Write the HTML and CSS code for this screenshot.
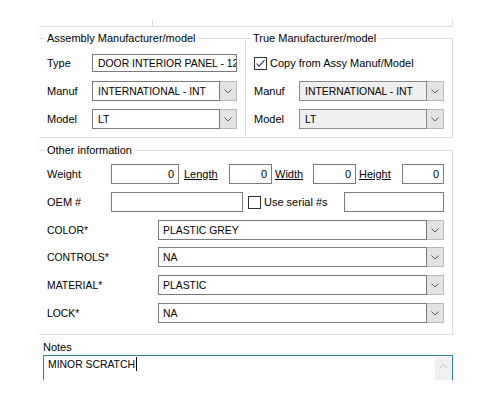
FILE: index.html
```html
<!DOCTYPE html>
<html>
<head>
<meta charset="utf-8">
<link rel="stylesheet" href="styles.css">
</head>
<body>
<div class="page">
  <div class="topbox"><span class="tick"></span></div>

  <div class="groups">
    <div class="group g1">
      <span class="legend">Assembly Manufacturer/model</span>
      <div class="row r-first">
        <span class="lbl w45">Type</span>
        <div class="tb w145 h18"><span class="val caps">DOOR INTERIOR PANEL - 12"</span></div>
      </div>
      <div class="row r-9">
        <span class="lbl w45">Manuf</span>
        <div class="combo w145">
          <div class="field"><span class="val caps">INTERNATIONAL - INT</span></div>
          <div class="btn"><svg width="8" height="5" viewBox="0 0 8 5"><polyline points="0.5,0.5 4,4 7.5,0.5" fill="none" stroke="#5a5a5a" stroke-width="1"/></svg></div>
        </div>
      </div>
      <div class="row r-8">
        <span class="lbl w45">Model</span>
        <div class="combo w145">
          <div class="field"><span class="val caps">LT</span></div>
          <div class="btn"><svg width="8" height="5" viewBox="0 0 8 5"><polyline points="0.5,0.5 4,4 7.5,0.5" fill="none" stroke="#5a5a5a" stroke-width="1"/></svg></div>
        </div>
      </div>
    </div>

    <div class="group g2">
      <span class="legend">True Manufacturer/model</span>
      <div class="row r-first">
        <span class="check"><svg width="13" height="13" viewBox="0 0 13 13"><rect x="0.5" y="0.5" width="12" height="12" fill="#fff" stroke="#333"/><polyline points="2.5,6.5 5,9.2 10.5,3.2" fill="none" stroke="#333" stroke-width="1.1"/></svg></span>
        <span class="chk-text">Copy from Assy Manuf/Model</span>
      </div>
      <div class="row r-9">
        <span class="lbl w45">Manuf</span>
        <div class="combo w145 disabled">
          <div class="field"><span class="val caps">INTERNATIONAL - INT</span></div>
          <div class="btn"><svg width="8" height="5" viewBox="0 0 8 5"><polyline points="0.5,0.5 4,4 7.5,0.5" fill="none" stroke="#5a5a5a" stroke-width="1"/></svg></div>
        </div>
      </div>
      <div class="row r-8">
        <span class="lbl w45">Model</span>
        <div class="combo w145 disabled">
          <div class="field"><span class="val caps">LT</span></div>
          <div class="btn"><svg width="8" height="5" viewBox="0 0 8 5"><polyline points="0.5,0.5 4,4 7.5,0.5" fill="none" stroke="#5a5a5a" stroke-width="1"/></svg></div>
        </div>
      </div>
    </div>
  </div>

  <div class="group other">
    <span class="legend">Other information</span>
    <div class="row r-first2">
      <span class="lbl w64">Weight</span>
      <div class="tb num w68"><span class="val">0</span></div>
      <span class="dim d-len">Length</span>
      <div class="tb num w43"><span class="val">0</span></div>
      <span class="dim d-wid">Width</span>
      <div class="tb num w43"><span class="val">0</span></div>
      <span class="dim d-hei">Height</span>
      <div class="tb num w42"><span class="val">0</span></div>
    </div>
    <div class="row r-8">
      <span class="lbl w64">OEM #</span>
      <div class="tb w132"></div>
      <span class="check c-serial"><svg width="13" height="13" viewBox="0 0 13 13"><rect x="0.5" y="0.5" width="12" height="12" fill="#fff" stroke="#333"/></svg></span>
      <span class="chk-text">Use serial #s</span>
      <div class="tb w100 push"></div>
    </div>
    <div class="row r-8">
      <span class="lbl w111 caps">COLOR*</span>
      <div class="combo w286">
        <div class="field"><span class="val caps">PLASTIC GREY</span></div>
        <div class="btn"><svg width="8" height="5" viewBox="0 0 8 5"><polyline points="0.5,0.5 4,4 7.5,0.5" fill="none" stroke="#5a5a5a" stroke-width="1"/></svg></div>
      </div>
    </div>
    <div class="row r-7">
      <span class="lbl w111 caps">CONTROLS*</span>
      <div class="combo w286">
        <div class="field"><span class="val caps">NA</span></div>
        <div class="btn"><svg width="8" height="5" viewBox="0 0 8 5"><polyline points="0.5,0.5 4,4 7.5,0.5" fill="none" stroke="#5a5a5a" stroke-width="1"/></svg></div>
      </div>
    </div>
    <div class="row r-8">
      <span class="lbl w111 caps">MATERIAL*</span>
      <div class="combo w286">
        <div class="field"><span class="val caps">PLASTIC</span></div>
        <div class="btn"><svg width="8" height="5" viewBox="0 0 8 5"><polyline points="0.5,0.5 4,4 7.5,0.5" fill="none" stroke="#5a5a5a" stroke-width="1"/></svg></div>
      </div>
    </div>
    <div class="row r-8">
      <span class="lbl w111 caps">LOCK*</span>
      <div class="combo w286">
        <div class="field"><span class="val caps">NA</span></div>
        <div class="btn"><svg width="8" height="5" viewBox="0 0 8 5"><polyline points="0.5,0.5 4,4 7.5,0.5" fill="none" stroke="#5a5a5a" stroke-width="1"/></svg></div>
      </div>
    </div>
  </div>

  <div class="notes">
    <div class="notes-label">Notes</div>
    <div class="notes-box">
      <div class="notes-text"><span class="caps">MINOR SCRATCH</span><span class="caret"></span></div>
      <div class="scroll"><svg width="9" height="5" viewBox="0 0 9 5"><polyline points="0.5,4.5 4.5,0.5 8.5,4.5" fill="none" stroke="#c0c0c0" stroke-width="1"/></svg></div>
    </div>
  </div>
</div>
</body>
</html>
```

FILE: styles.css
```css
* { box-sizing: border-box; }

body {
  margin: 0;
  background: #fff;
  font-family: "Liberation Sans", Arial, sans-serif;
  font-size: 11px;
  color: #000;
}

.page {
  width: 453px;
  padding: 20px 0 0 39px;
}

.topbox {
  height: 7px;
  border-right: 1px solid #dcdcdc;
  border-bottom: 1px solid #dcdcdc;
}

.tick {
  display: block;
  margin-left: 113px;
  width: 1px;
  height: 6px;
  background: #d6d6d6;
}

.groups {
  display: flex;
  margin-top: 11px;
}

.group {
  position: relative;
  border-top: 1px solid #dcdcdc;
  border-right: 1px solid #dcdcdc;
  border-bottom: 1px solid #dcdcdc;
  padding: 15px 8px 8px 8px;
}

.g1 { width: 207px; }
.g2 { width: 207px; }

.legend {
  position: absolute;
  top: -7px;
  left: 6px;
  padding: 0 2px;
  background: #fff;
  line-height: 13px;
  white-space: nowrap;
}

.g2 .legend { left: 5px; }

.other {
  width: 414px;
  margin-top: 12px;
  padding: 13px 8px 11px 8px;
}

.row {
  display: flex;
  align-items: center;
  height: 20px;
}

.r-first { height: 18px; }
.r-first2 { margin-top: 0; }
.r-9 { margin-top: 9px; }
.r-8 { margin-top: 8px; }
.r-7 { margin-top: 7px; }

.lbl {
  flex: none;
  line-height: 13px;
  white-space: nowrap;
}

.w45 { width: 45px; }
.w64 { width: 64px; }
.w111 { width: 111px; }

.caps { font-size: 10.4px; }

.tb {
  flex: none;
  height: 20px;
  border: 1px solid #7a7a7a;
  background: #fff;
  display: flex;
  align-items: center;
  padding: 0 5px;
  overflow: hidden;
  white-space: nowrap;
}

.h18 { height: 18px; }

.num {
  justify-content: flex-end;
  padding: 0 4px;
}

.w68 { width: 68px; }
.w43 { width: 43px; }
.w42 { width: 42px; }
.w132 { width: 132px; }
.w100 { width: 100px; }
.w145 { width: 145px; }
.w286 { width: 286px; }

.push { margin-left: auto; }

.val { line-height: 13px; }

.dim {
  flex: none;
  text-decoration: underline;
  line-height: 13px;
  color: #000;
}

.d-len { width: 50px; padding-left: 5px; }
.d-wid { width: 41px; padding-left: 3px; }
.d-hei { width: 46px; padding-left: 3px; }

.combo {
  flex: none;
  display: flex;
  height: 20px;
}

.combo .field {
  flex: 1;
  min-width: 0;
  border: 1px solid #7a7a7a;
  background: #fff;
  display: flex;
  align-items: center;
  padding: 0 5px;
  overflow: hidden;
  white-space: nowrap;
}

.combo.w286 .field { padding-left: 4px; }

.combo .btn {
  flex: none;
  width: 17px;
  border: 1px solid #b9b9b9;
  border-left: none;
  background: #e3e3e3;
  display: flex;
  align-items: center;
  justify-content: center;
}

.combo.disabled .field {
  background: #efefef;
  border-color: #8a8a8a;
}

.check {
  flex: none;
  display: flex;
  width: 13px;
  height: 13px;
}

.chk-text {
  margin-left: 3px;
  line-height: 13px;
  white-space: nowrap;
}

.c-serial { margin-left: 5px; }

.notes {
  margin-left: 4px;
  width: 410px;
}

.notes-label {
  margin-top: 6px;
  line-height: 13px;
}

.notes-box {
  margin-top: 1px;
  height: 25px;
  border: 1px solid #2f7fae;
  border-bottom: none;
  display: flex;
}

.notes-text {
  flex: 1;
  padding: 2px 0 0 4px;
  line-height: 13px;
  display: flex;
  align-items: flex-start;
}

.caret {
  display: inline-block;
  width: 1px;
  height: 14px;
  background: #000;
  margin-left: 1px;
  margin-top: -1px;
}

.scroll {
  flex: none;
  width: 17px;
  margin-top: 1px;
  background: #f0f0f0;
  display: flex;
  justify-content: center;
  padding-top: 7px;
}
```
